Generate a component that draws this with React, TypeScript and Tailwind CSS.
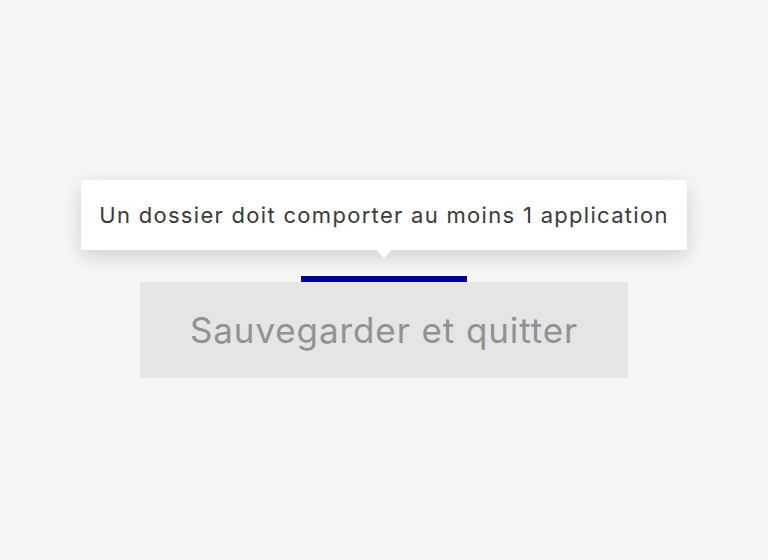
import React from 'react';

const font = { fontFamily: 'Inter, Lato, sans-serif' };

const App: React.FC = () => {
  return (
    <div className="min-h-[560px] w-full bg-[#f6f6f6] pt-[180px]" style={font}>
      <div className="flex flex-col items-center">
        <div className="relative flex h-[70px] w-[606px] items-center justify-center bg-white shadow-[0_6px_18px_rgba(0,0,0,0.16)]">
          <span className="text-[22px] tracking-[1.3px] text-[#3a3a3a]">Un dossier doit comporter au moins 1 application</span>
          <span className="absolute left-1/2 top-full -ml-[8px] h-0 w-0 border-x-[8px] border-t-[8px] border-x-transparent border-t-white" />
        </div>
        <div className="mt-[26px] h-[6px] w-[166px] bg-[#000091]" />
        <button
          type="button"
          disabled
          className="flex h-[96px] w-[488px] items-center justify-center bg-[#e5e5e5] text-[35px] tracking-[0.9px] text-[#929292]"
        >
          Sauvegarder et quitter
        </button>
      </div>
    </div>
  );
};

export default App;
